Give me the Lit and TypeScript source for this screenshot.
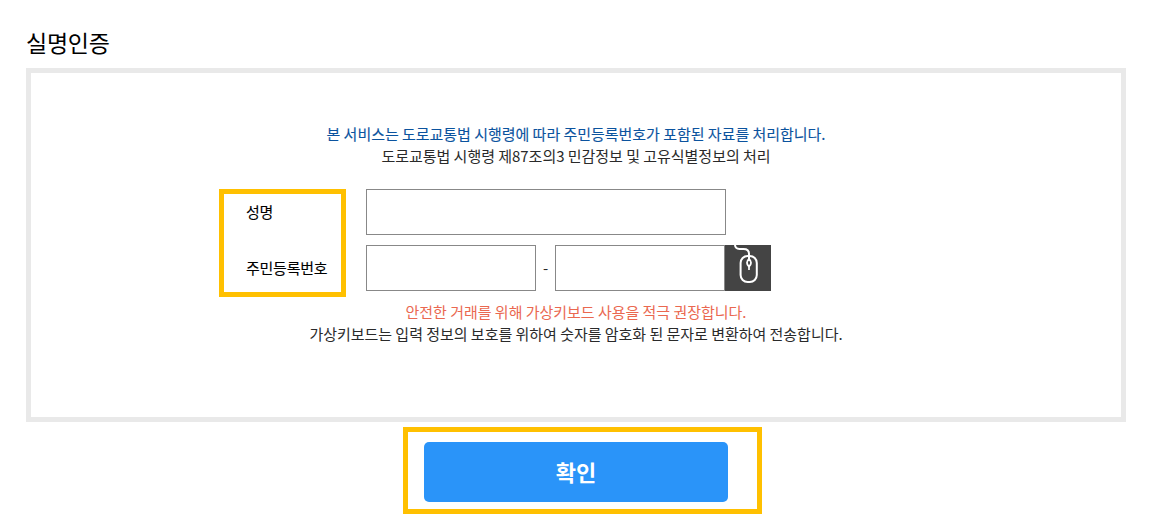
import {LitElement, html, css} from 'lit';
import {customElement} from 'lit/decorators.js';

@customElement('mouse-key-button')
export class MouseKeyButton extends LitElement {
  static styles = css`
    :host {
      display: block;
      width: 46px;
      height: 46px;
    }

    .keypad-button {
      display: block;
      width: 46px;
      height: 46px;
      border: none;
      padding: 0;
      background: #444;
      cursor: pointer;
    }

    .icon {
      display: block;
    }
  `;

  render() {
    return html`
      <button class="keypad-button" aria-label="가상키보드">
        <svg class="icon" width="46" height="46" viewBox="0 0 46 46" fill="none" stroke="#fff" stroke-width="2">
          <path d="M10 0C10.2 2.8 11.5 3.9 14.5 3.9H18.5C22.5 3.9 24 5.4 24 8.8V14" />
          <rect x="15.6" y="11" width="16.2" height="26" rx="7" />
          <path d="M24 14C21.4 16.4 21.2 18.8 24 21.6C26.8 18.8 26.6 16.4 24 14Z" stroke-width="1.8" />
          <path d="M24 21V25" stroke-width="1.7" />
        </svg>
      </button>
    `;
  }
}

@customElement('app-root')
export class AppRoot extends LitElement {
  static styles = css`
    :host {
      display: block;
      box-sizing: border-box;
      width: 1150px;
      height: 520px;
      padding: 25px 24px 0 26px;
      overflow: hidden;
      background: #fff;
      color: #2a2a2a;
      font-family: 'Noto Sans CJK KR', sans-serif;
      font-size: 15px;
      line-height: 22px;
    }

    .title {
      margin: 0 0 9px;
      color: #000;
      font-size: 23px;
      font-weight: 400;
      letter-spacing: -0.25px;
      line-height: 34px;
    }

    .panel {
      box-sizing: border-box;
      height: 354px;
      border: 5px solid #e9e9e9;
      padding-top: 50px;
    }

    .text {
      margin: 0;
      letter-spacing: -0.03px;
      text-align: center;
    }

    .law {
      color: #0b539e;
      -webkit-text-stroke: 0.1px;
    }

    .warning {
      color: #ea6850;
    }

    .form {
      position: relative;
      display: flex;
      flex-direction: column;
      gap: 10px;
      margin: 22px 0 10px 215px;
    }

    .row {
      display: flex;
      align-items: center;
      height: 46px;
    }

    .label {
      width: 120px;
      color: #000;
      letter-spacing: -0.25px;
      -webkit-text-stroke: 0.1px;
    }

    .input {
      box-sizing: border-box;
      width: 170px;
      height: 46px;
      border: 1px solid #888;
      border-radius: 0;
      padding: 0 10px;
      background: #fff;
      font: inherit;
      outline: none;
    }

    .input.name {
      width: 360px;
    }

    .dash {
      width: 19px;
      text-align: center;
    }

    .highlight {
      position: absolute;
      box-sizing: border-box;
      border: 5px solid #ffc000;
      pointer-events: none;
    }

    .highlight.labels {
      left: -27px;
      top: 0;
      width: 127px;
      height: 108px;
    }

    .highlight.confirm {
      left: -21px;
      top: -15px;
      width: 359px;
      height: 87px;
    }

    .actions {
      position: relative;
      width: 304px;
      margin: 20px auto 0;
    }

    .confirm-button {
      display: block;
      width: 304px;
      height: 60px;
      border: none;
      border-radius: 5px;
      padding: 0 0 2px;
      background: #2a94f9;
      color: #fff;
      font-family: inherit;
      font-size: 22px;
      font-weight: 700;
      cursor: pointer;
    }
  `;

  render() {
    return html`
      <h1 class="title">실명인증</h1>
      <section class="panel">
        <p class="text law">본 서비스는 도로교통법 시행령에 따라 주민등록번호가 포함된 자료를 처리합니다.</p>
        <p class="text">도로교통법 시행령 제87조의3 민감정보 및 고유식별정보의 처리</p>
        <div class="form">
          <div class="row">
            <label class="label" for="name">성명</label>
            <input class="input name" id="name" type="text" />
          </div>
          <div class="row">
            <label class="label" for="front">주민등록번호</label>
            <input class="input" id="front" type="text" maxlength="6" />
            <span class="dash">-</span>
            <input class="input" type="password" maxlength="7" />
            <mouse-key-button></mouse-key-button>
          </div>
          <div class="highlight labels"></div>
        </div>
        <p class="text warning">안전한 거래를 위해 가상키보드 사용을 적극 권장합니다.</p>
        <p class="text">가상키보드는 입력 정보의 보호를 위하여 숫자를 암호화 된 문자로 변환하여 전송합니다.</p>
      </section>
      <div class="actions">
        <button class="confirm-button">확인</button>
        <div class="highlight confirm"></div>
      </div>
    `;
  }
}
